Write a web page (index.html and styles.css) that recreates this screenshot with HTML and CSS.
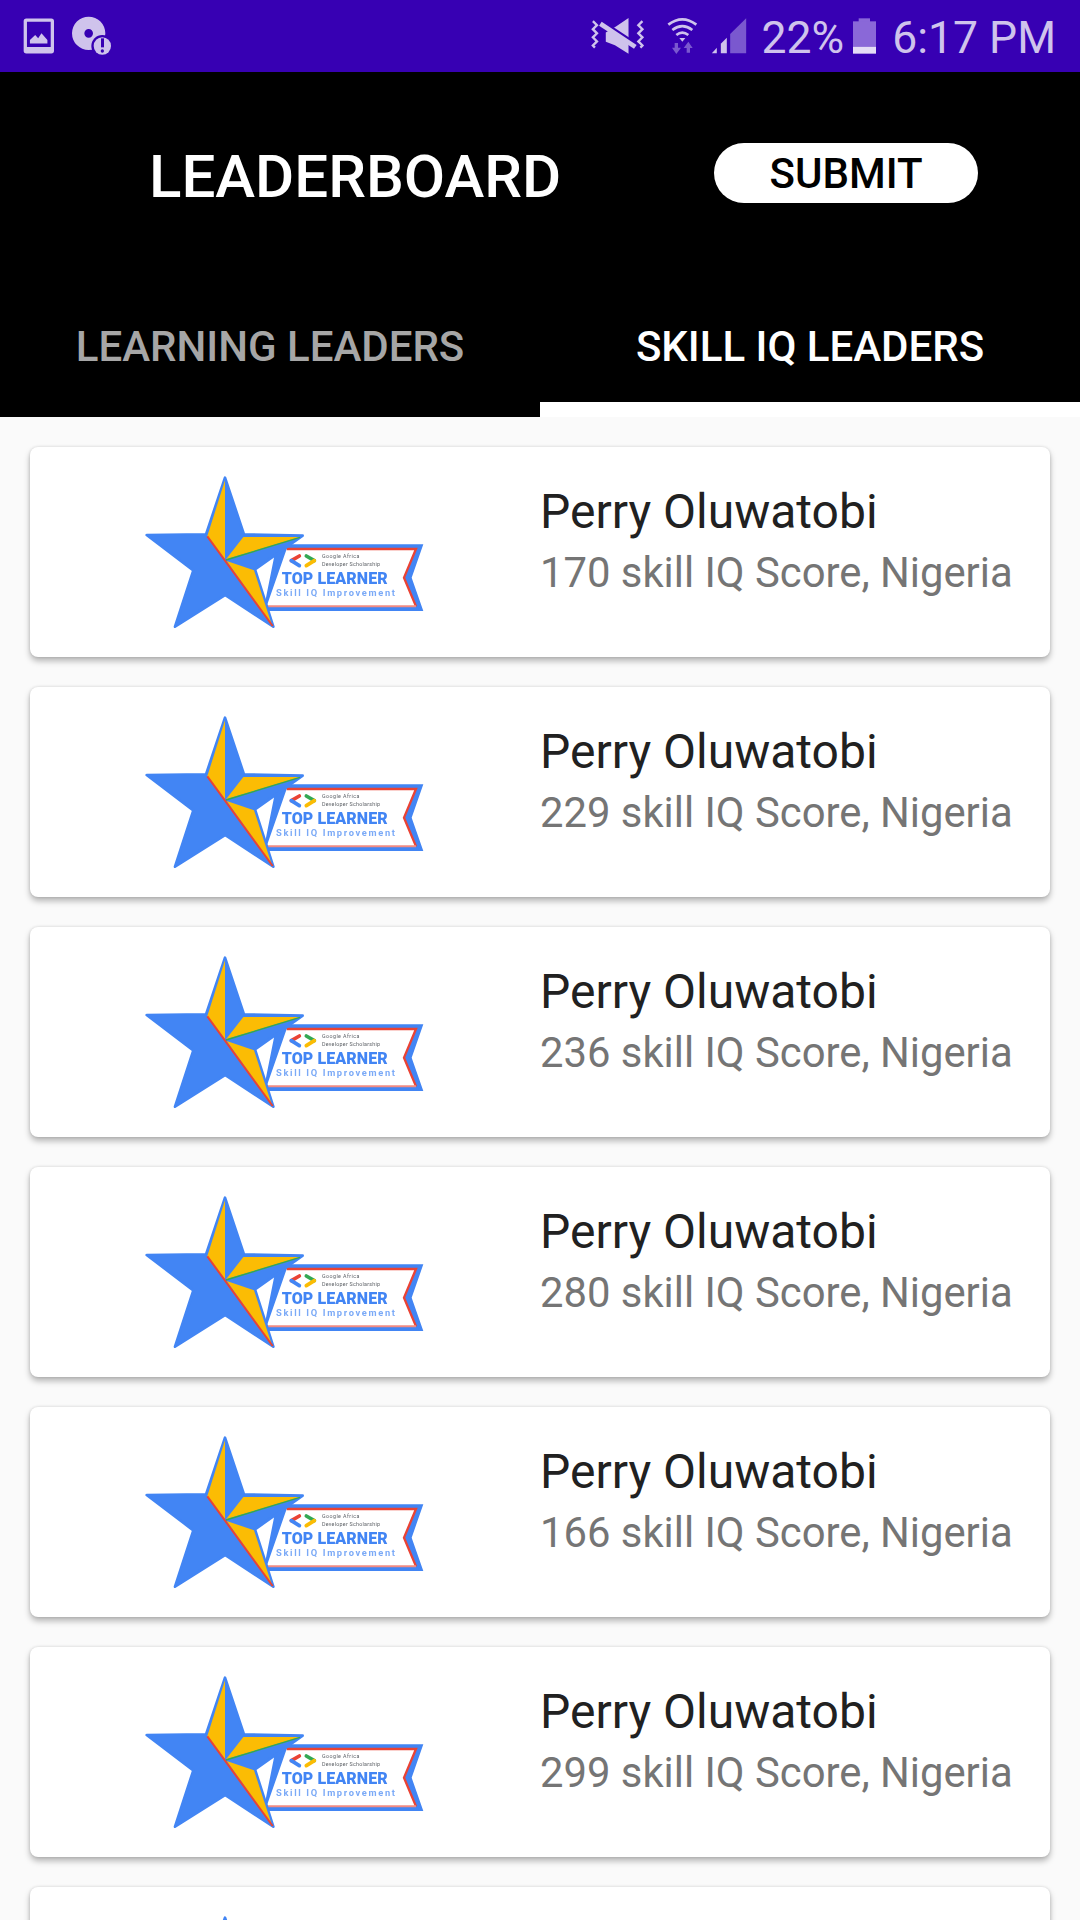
FILE: index.html
```html
<!DOCTYPE html>
<html>

<head>
    <title>Leaderboard</title>
    <meta charset="UTF-8">
    <link rel="stylesheet" href="styles.css">
</head>

<body>
    <svg class="defs" width="0" height="0">
        <symbol id="badge" viewBox="0 0 900 540">
            <!-- ribbon -->
            <polygon points="440,250 880,250 845,350 880,450 400,450" fill="#4285f4" />
            <polygon points="470,264 858,264 822,350 858,436 410,436" fill="#fff" />
            <polyline points="470,264 858,264 822,350 858,436" fill="none" stroke="#ea4335" stroke-width="7" />
            <line x1="410" y1="436" x2="858" y2="436" stroke="#f28b82" stroke-width="6" />
            <!-- star -->
            <polygon points="285,50 342,220 518,224 375,325 430,497 285,402 135,497 190,328 50,222 228,220" fill="#4285f4" stroke="#4285f4" stroke-width="8" stroke-linejoin="round" />
            <polygon points="285,58 285,295 232,225" fill="#fbbc04" />
            <polygon points="510,228 340,228 288,295" fill="#fbbc04" />
            <polygon points="290,300 372,328 425,490" fill="#fbbc04" />
            <line x1="232" y1="226" x2="428" y2="495" stroke="#ea4335" stroke-width="6" />
            <line x1="288" y1="297" x2="510" y2="229" stroke="#34a853" stroke-width="4" />
            <!-- logo -->
            <g fill="none" stroke-width="11" stroke-linecap="round">
                <line x1="508" y1="285" x2="484" y2="299" stroke="#ea4335" />
                <line x1="484" y1="299" x2="508" y2="314" stroke="#4285f4" />
                <line x1="529" y1="285" x2="553" y2="299" stroke="#34a853" />
                <line x1="553" y1="299" x2="529" y2="314" stroke="#fbbc04" />
            </g>
        </symbol>
    </svg>

    <div class="status-bar">
        <div class="status-left">
            <svg width="31" height="36" viewBox="66 54 94 108">
                <path fill-rule="evenodd" fill="#cfc3ec" d="M76 55h76a8 8 0 0 1 8 8v90a8 8 0 0 1-8 8H76a8 8 0 0 1-8-8V63a8 8 0 0 1 8-8zM78 65v76h72V65zM87 131v-11l16-15 9 10 10-15 18 20v11z" />
            </svg>
            <svg width="40" height="40" viewBox="210 48 120 120">
                <path fill-rule="evenodd" fill="#cfc3ec" d="M260 50a50 50 0 1 0 0 100a50 50 0 1 0 0-100zM260 87a13 13 0 1 1 0 26a13 13 0 1 1 0-26z" />
                <circle cx="301" cy="138" r="33" fill="#3700b3" />
                <circle cx="301" cy="138" r="26" fill="#cfc3ec" />
                <rect x="297" y="115" width="9" height="27" fill="#3700b3" />
                <circle cx="301" cy="153" r="5" fill="#3700b3" />
            </svg>
        </div>
        <div class="status-right">
            <svg class="icon-vibrate" width="54" height="38" viewBox="145 52 158 112">
                <path fill="none" stroke="#cfc3ec" stroke-width="7" d="M150 64l12 12-12 12 12 12-12 12 12 12-12 12 6 6M296 64l-12 12 12 12-12 12 12 12-12 12 12 12-6 6" />
                <polygon fill="#cfc3ec" points="255,55 255,160 215,135 188,125 188,98 218,80" />
                <line x1="165" y1="58" x2="285" y2="137" stroke="#3700b3" stroke-width="10" />
                <line x1="172" y1="72" x2="275" y2="140" stroke="#cfc3ec" stroke-width="14" />
            </svg>
            <svg class="icon-wifi" width="34" height="38" viewBox="362 50 100 114">
                <g fill="none" stroke="#cfc3ec" stroke-width="8">
                    <path d="M368 73Q410 41 452 73" />
                    <path d="M380 89Q410 66 440 89" />
                    <path d="M392 104Q410 90 428 104" />
                </g>
                <polygon fill="#cfc3ec" points="401,113 419,113 410,124" />
                <path fill="#7a58cf" d="M387 128h10v14h9l-14 19-13-19h8zM423 157v-14h-9l14-19 13 19h-8v14z" />
            </svg>
            <svg class="icon-signal" width="36" height="36" viewBox="493 54 107 108">
                <polygon fill="#7a58cf" points="550,102 598,55 598,160 550,160" />
                <polygon fill="#cfc3ec" points="495,160 510,143 510,160" />
                <polygon fill="#cfc3ec" points="522,131 540,113 540,160 522,160" />
            </svg>
            <span class="status-text battery-text">22%</span>
            <svg class="icon-battery" width="23" height="36" viewBox="910 54 69 108">
                <rect x="927" y="55" width="34" height="12" fill="#8a68d8" />
                <rect x="910" y="64" width="69" height="76" fill="#8a68d8" />
                <rect x="910" y="140" width="69" height="21" fill="#e4dcf6" />
            </svg>
            <span class="status-text clock">6:17 PM</span>
        </div>
    </div>

    <div class="header">
        <div class="toolbar">
            <h1>LEADERBOARD</h1>
            <div class="submit">SUBMIT</div>
        </div>
        <div class="tabs">
            <div class="tab">LEARNING LEADERS</div>
            <div class="tab active">SKILL IQ LEADERS</div>
        </div>
    </div>

    <div class="list">
        <div class="card">
            <svg class="badge" viewBox="0 0 900 540">
                <use href="#badge" width="900" height="540" />
                <text class="badge-small" x="576" y="292" textLength="112">Google Africa</text>
                <text class="badge-small" x="576" y="315" textLength="174">Developer Scholarship</text>
                <text class="badge-title" x="455" y="370" textLength="318">TOP LEARNER</text>
                <text class="badge-sub" x="438" y="404" textLength="357">Skill IQ Improvement</text>
            </svg>
            <div class="info">
                <div class="name">Perry Oluwatobi</div>
                <div class="score">170 skill IQ Score, Nigeria</div>
            </div>
        </div>
        <div class="card">
            <svg class="badge" viewBox="0 0 900 540">
                <use href="#badge" width="900" height="540" />
                <text class="badge-small" x="576" y="292" textLength="112">Google Africa</text>
                <text class="badge-small" x="576" y="315" textLength="174">Developer Scholarship</text>
                <text class="badge-title" x="455" y="370" textLength="318">TOP LEARNER</text>
                <text class="badge-sub" x="438" y="404" textLength="357">Skill IQ Improvement</text>
            </svg>
            <div class="info">
                <div class="name">Perry Oluwatobi</div>
                <div class="score">229 skill IQ Score, Nigeria</div>
            </div>
        </div>
        <div class="card">
            <svg class="badge" viewBox="0 0 900 540">
                <use href="#badge" width="900" height="540" />
                <text class="badge-small" x="576" y="292" textLength="112">Google Africa</text>
                <text class="badge-small" x="576" y="315" textLength="174">Developer Scholarship</text>
                <text class="badge-title" x="455" y="370" textLength="318">TOP LEARNER</text>
                <text class="badge-sub" x="438" y="404" textLength="357">Skill IQ Improvement</text>
            </svg>
            <div class="info">
                <div class="name">Perry Oluwatobi</div>
                <div class="score">236 skill IQ Score, Nigeria</div>
            </div>
        </div>
        <div class="card">
            <svg class="badge" viewBox="0 0 900 540">
                <use href="#badge" width="900" height="540" />
                <text class="badge-small" x="576" y="292" textLength="112">Google Africa</text>
                <text class="badge-small" x="576" y="315" textLength="174">Developer Scholarship</text>
                <text class="badge-title" x="455" y="370" textLength="318">TOP LEARNER</text>
                <text class="badge-sub" x="438" y="404" textLength="357">Skill IQ Improvement</text>
            </svg>
            <div class="info">
                <div class="name">Perry Oluwatobi</div>
                <div class="score">280 skill IQ Score, Nigeria</div>
            </div>
        </div>
        <div class="card">
            <svg class="badge" viewBox="0 0 900 540">
                <use href="#badge" width="900" height="540" />
                <text class="badge-small" x="576" y="292" textLength="112">Google Africa</text>
                <text class="badge-small" x="576" y="315" textLength="174">Developer Scholarship</text>
                <text class="badge-title" x="455" y="370" textLength="318">TOP LEARNER</text>
                <text class="badge-sub" x="438" y="404" textLength="357">Skill IQ Improvement</text>
            </svg>
            <div class="info">
                <div class="name">Perry Oluwatobi</div>
                <div class="score">166 skill IQ Score, Nigeria</div>
            </div>
        </div>
        <div class="card">
            <svg class="badge" viewBox="0 0 900 540">
                <use href="#badge" width="900" height="540" />
                <text class="badge-small" x="576" y="292" textLength="112">Google Africa</text>
                <text class="badge-small" x="576" y="315" textLength="174">Developer Scholarship</text>
                <text class="badge-title" x="455" y="370" textLength="318">TOP LEARNER</text>
                <text class="badge-sub" x="438" y="404" textLength="357">Skill IQ Improvement</text>
            </svg>
            <div class="info">
                <div class="name">Perry Oluwatobi</div>
                <div class="score">299 skill IQ Score, Nigeria</div>
            </div>
        </div>
        <div class="card">
            <svg class="badge" viewBox="0 0 900 540">
                <use href="#badge" width="900" height="540" />
            </svg>
        </div>
    </div>
</body>

</html>
```

FILE: styles.css
```css
html {
    height: 1920px;
    overflow: hidden;
}

body {
    font-family: Roboto, "Liberation Sans", sans-serif;
    margin: 0;
    padding: 0;
    height: 1920px;
    overflow: hidden;
    background-color: #fafafa;
}

.defs {
    display: block;
    height: 0;
}

.status-bar {
    height: 72px;
    background-color: #3700b3;
    display: flex;
    justify-content: space-between;
    align-items: center;
    box-sizing: border-box;
    padding: 0 24px 0 22px;
}

.status-left {
    display: flex;
    align-items: center;
    gap: 18px;
    margin-left: 1px;
}

.status-right {
    display: flex;
    align-items: center;
}

.status-text {
    font-size: 44.5px;
    line-height: 72px;
    padding-top: 3px;
    color: #cfc3ec;
}

.icon-vibrate {
    margin-right: 21px;
}

.icon-wifi {
    margin-right: 11px;
}

.icon-signal {
    margin-right: 15px;
}

.battery-text {
    margin-right: 9px;
}

.icon-battery {
    margin-right: 16px;
}

.header {
    background-color: #000;
    height: 345px;
}

.toolbar {
    height: 200px;
    box-sizing: border-box;
    padding: 2px 0 0 149px;
    display: flex;
    align-items: center;
}

h1 {
    margin: 6px 0 0;
    width: 565px;
    font-size: 60px;
    font-weight: 500;
    color: #fff;
    white-space: nowrap;
}

.submit {
    width: 264px;
    height: 60px;
    line-height: 62px;
    border-radius: 30px;
    background-color: #fff;
    color: #000;
    font-size: 42px;
    font-weight: 500;
    text-align: center;
}

.tabs {
    display: flex;
    height: 145px;
}

.tab {
    flex: 1;
    box-sizing: border-box;
    height: 145px;
    padding-top: 48px;
    line-height: 54px;
    text-align: center;
    font-size: 42px;
    font-weight: 500;
    color: #a6a6a6;
}

.tab.active {
    color: #fff;
    border-bottom: 15px solid #fff;
}

.list {
    display: flex;
    flex-direction: column;
    gap: 30px;
    padding: 30px 30px 0;
}

.card {
    flex: none;
    height: 210px;
    display: flex;
    align-items: center;
    background-color: #fff;
    border-radius: 8px;
    box-shadow: 0 4px 6px rgba(0, 0, 0, 0.28), 0 0 3px rgba(0, 0, 0, 0.14);
}

.badge {
    flex: none;
    width: 300px;
    height: 180px;
    margin: -3px 110px 0 100px;
    filter: blur(0.4px);
}

.badge-small {
    font-size: 16px;
    fill: #5f6368;
}

.badge-title {
    font-size: 48px;
    font-weight: 900;
    fill: #4285f4;
}

.badge-sub {
    font-size: 28px;
    font-weight: 700;
    fill: #7baaf7;
}

.info {
    margin-top: -20px;
}

.name {
    font-size: 48px;
    line-height: 60px;
    color: #212121;
    white-space: nowrap;
}

.score {
    font-size: 41.8px;
    line-height: 58px;
    margin-top: 2px;
    color: #757575;
    white-space: nowrap;
}
```
